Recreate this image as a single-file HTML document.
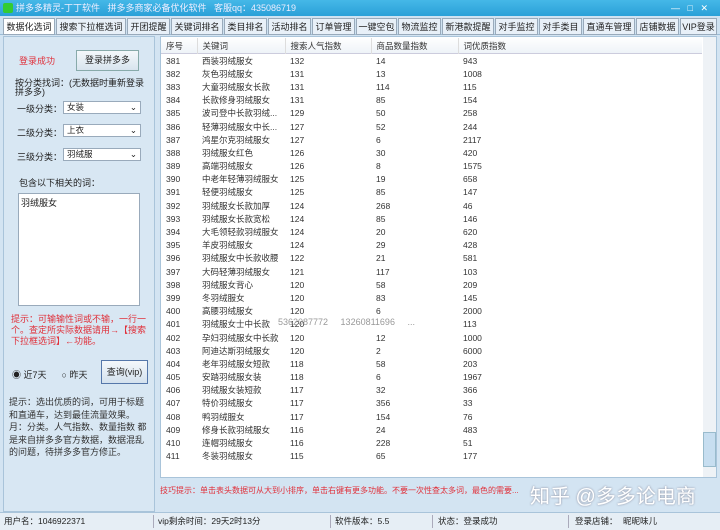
<!DOCTYPE html>
<html><head><meta charset="utf-8"><style>
*{margin:0;padding:0;box-sizing:border-box}
body{width:720px;height:530px;overflow:hidden;background:#d3e4f2;font-family:"Liberation Sans","Noto Sans CJK SC",sans-serif;font-size:9px;color:#222;position:relative}
.abs{position:absolute}
.title{left:0;top:0;width:720px;height:16px;background:linear-gradient(#45b8e8,#2aa0d8);color:#eef;font-size:9px;line-height:16px;padding-left:16px}
.tabs{left:0;top:16px;width:720px;height:19px;background:#cfe2f1;border-bottom:1px solid #9bbcd6}
.tab{position:absolute;top:2px;height:17px;line-height:16px;border:1px solid #9ab;background:#e8f0f8;font-size:9px;text-align:center;color:#222}
.sel{border:1px solid #9ab;background:#fff;height:13px;font-size:8.5px;line-height:11px;padding-left:3px}
.red{color:#e0303a}
table{border-collapse:collapse;font-size:8.5px}
td{height:13.2px;padding:0 0 0 5px;white-space:nowrap}
</style></head><body>
<div class="abs title">拼多多精灵-丁丁软件&nbsp;&nbsp; 拼多多商家必备优化软件&nbsp;&nbsp; 客服qq：435086719
<span style="position:absolute;left:3px;top:3px;width:10px;height:10px;background:#3c3;border-radius:2px"></span>
<span style="position:absolute;right:12px;top:0;color:#fff">—&nbsp;&nbsp; □&nbsp;&nbsp; ✕</span></div>
<div class="abs tabs">
<div class="tab" style="left:3px;width:52px;background:#fff">数据化选词</div>
<div class="tab" style="left:56px;width:70px">搜索下拉框选词</div>
<div class="tab" style="left:127px;width:43px">开团提醒</div>
<div class="tab" style="left:171px;width:52px">关键词排名</div>
<div class="tab" style="left:224px;width:43px">类目排名</div>
<div class="tab" style="left:268px;width:43px">活动排名</div>
<div class="tab" style="left:312px;width:43px">订单管理</div>
<div class="tab" style="left:356px;width:41px">一键空包</div>
<div class="tab" style="left:398px;width:43px">物流监控</div>
<div class="tab" style="left:442px;width:52px">新港款提醒</div>
<div class="tab" style="left:495px;width:43px">对手监控</div>
<div class="tab" style="left:539px;width:43px">对手类目</div>
<div class="tab" style="left:583px;width:52px">直通车管理</div>
<div class="tab" style="left:636px;width:43px">店铺数据</div>
<div class="tab" style="left:680px;width:37px">VIP登录</div>
</div>
<div class="abs" style="left:3px;top:36px;width:152px;height:476px;background:#d8e7f3;border:1px solid #a9c4da"></div>
<div class="abs red" style="left:19px;top:54px">登录成功</div>
<div class="abs" style="left:76px;top:50px;width:63px;height:21px;border:1px solid #8aa;background:linear-gradient(#f4f8fb,#d8e4ee);text-align:center;line-height:19px">登录拼多多</div>
<div class="abs" style="left:15px;top:79px;width:135px;line-height:9px">按分类找词：(无数据时重新登录拼多多)</div>
<div class="abs" style="left:17px;top:102px">一级分类：</div><div class="abs sel" style="left:63px;top:101px;width:78px">女装<span style="float:right;padding-right:3px">⌄</span></div>
<div class="abs" style="left:17px;top:126px">二级分类：</div><div class="abs sel" style="left:63px;top:124px;width:78px">上衣<span style="float:right;padding-right:3px">⌄</span></div>
<div class="abs" style="left:17px;top:150px">三级分类：</div><div class="abs sel" style="left:63px;top:148px;width:78px">羽绒服<span style="float:right;padding-right:3px">⌄</span></div>
<div class="abs" style="left:19px;top:176px">包含以下相关的词：</div>
<div class="abs" style="left:18px;top:193px;width:122px;height:113px;background:#fff;border:1px solid #9ab;padding:2px">羽绒服女</div>
<div class="abs red" style="left:11px;top:314px;width:140px;line-height:11px">提示：可输输性词或不输，一行一个。查定所实际数据请用→【搜索下拉框选词】←功能。</div>
<div class="abs" style="left:12px;top:368px">◉ 近7天&nbsp;&nbsp;&nbsp;&nbsp;&nbsp;&nbsp;○ 昨天</div>
<div class="abs" style="left:101px;top:360px;width:47px;height:24px;border:1px solid #57a;background:linear-gradient(#f4f8fb,#d4e2ee);text-align:center;line-height:22px">查询(vip)</div>
<div class="abs" style="left:9px;top:396px;width:142px;line-height:12.5px;color:#333">提示：选出优质的词，可用于标题和直通车，达到最佳流量效果。月：分类。人气指数、数量指数 都是来自拼多多官方数据，数据混乱的问题，待拼多多官方修正。</div>
<div class="abs" style="left:160px;top:36px;width:557px;height:442px;background:#fff;border:1px solid #a9c4da"></div>
<div class="abs" style="left:161px;top:37px;width:541px;height:17px;background:linear-gradient(#fff,#eef3f8);border-bottom:1px solid #ccd"></div>
<div class="abs" style="left:703px;top:37px;width:13px;height:440px;background:#eef2f6"><div style="margin-top:395px;height:35px;background:#c7def0;border:1px solid #9bc"></div></div>
<table class="abs" style="left:161px;top:38px;color:#333">
<colgroup><col style="width:36px"><col style="width:88px"><col style="width:86px"><col style="width:87px"><col style="width:64px"></colgroup>
<tr style="height:16px"><td>序号</td><td style="border-left:1px solid #ddd">关键词</td><td style="border-left:1px solid #ddd">搜索人气指数</td><td style="border-left:1px solid #ddd">商品数量指数</td><td style="border-left:1px solid #ddd">词优质指数</td></tr>
<tr><td>381</td><td>西装羽绒服女</td><td>132</td><td>14</td><td>943</td></tr>
<tr><td>382</td><td>灰色羽绒服女</td><td>131</td><td>13</td><td>1008</td></tr>
<tr><td>383</td><td>大童羽绒服女长款</td><td>131</td><td>114</td><td>115</td></tr>
<tr><td>384</td><td>长款修身羽绒服女</td><td>131</td><td>85</td><td>154</td></tr>
<tr><td>385</td><td>波司登中长款羽绒...</td><td>129</td><td>50</td><td>258</td></tr>
<tr><td>386</td><td>轻薄羽绒服女中长...</td><td>127</td><td>52</td><td>244</td></tr>
<tr><td>387</td><td>鸿星尔克羽绒服女</td><td>127</td><td>6</td><td>2117</td></tr>
<tr><td>388</td><td>羽绒服女红色</td><td>126</td><td>30</td><td>420</td></tr>
<tr><td>389</td><td>高端羽绒服女</td><td>126</td><td>8</td><td>1575</td></tr>
<tr><td>390</td><td>中老年轻薄羽绒服女</td><td>125</td><td>19</td><td>658</td></tr>
<tr><td>391</td><td>轻便羽绒服女</td><td>125</td><td>85</td><td>147</td></tr>
<tr><td>392</td><td>羽绒服女长款加厚</td><td>124</td><td>268</td><td>46</td></tr>
<tr><td>393</td><td>羽绒服女长款宽松</td><td>124</td><td>85</td><td>146</td></tr>
<tr><td>394</td><td>大毛领轻款羽绒服女</td><td>124</td><td>20</td><td>620</td></tr>
<tr><td>395</td><td>羊皮羽绒服女</td><td>124</td><td>29</td><td>428</td></tr>
<tr><td>396</td><td>羽绒服女中长款收腰</td><td>122</td><td>21</td><td>581</td></tr>
<tr><td>397</td><td>大码轻薄羽绒服女</td><td>121</td><td>117</td><td>103</td></tr>
<tr><td>398</td><td>羽绒服女背心</td><td>120</td><td>58</td><td>209</td></tr>
<tr><td>399</td><td>冬羽绒服女</td><td>120</td><td>83</td><td>145</td></tr>
<tr><td>400</td><td>高腰羽绒服女</td><td>120</td><td>6</td><td>2000</td></tr>
<tr><td>401</td><td>羽绒服女士中长款</td><td>120</td><td></td><td>113</td></tr>
<tr><td>402</td><td>孕妇羽绒服女中长款</td><td>120</td><td>12</td><td>1000</td></tr>
<tr><td>403</td><td>阿迪达斯羽绒服女</td><td>120</td><td>2</td><td>6000</td></tr>
<tr><td>404</td><td>老年羽绒服女短款</td><td>118</td><td>58</td><td>203</td></tr>
<tr><td>405</td><td>安踏羽绒服女装</td><td>118</td><td>6</td><td>1967</td></tr>
<tr><td>406</td><td>羽绒服女装短款</td><td>117</td><td>32</td><td>366</td></tr>
<tr><td>407</td><td>特价羽绒服女</td><td>117</td><td>356</td><td>33</td></tr>
<tr><td>408</td><td>鸭羽绒服女</td><td>117</td><td>154</td><td>76</td></tr>
<tr><td>409</td><td>修身长款羽绒服女</td><td>116</td><td>24</td><td>483</td></tr>
<tr><td>410</td><td>连帽羽绒服女</td><td>116</td><td>228</td><td>51</td></tr>
<tr><td>411</td><td>冬装羽绒服女</td><td>115</td><td>65</td><td>177</td></tr>
</table>
<div class="abs" style="left:278px;top:317px;color:#999">5362087772&nbsp;&nbsp;&nbsp;&nbsp; 13260811696&nbsp;&nbsp;&nbsp;&nbsp; ...</div>
<div class="abs red" style="left:160px;top:485px;font-size:8px">技巧提示：单击表头数据可从大到小排序，单击右键有更多功能。不要一次性查太多词，最色的需要...</div>
<div class="abs" style="left:530px;top:480px;font-size:20px;color:#fff;text-shadow:0 0 2px #889">知乎 @多多论电商</div>
<div class="abs" style="left:0;top:512px;width:720px;height:18px;background:#e6eef5;border-top:1px solid #a9c4da;line-height:17px;font-size:8.5px">
<span class="abs" style="left:4px">用户名：1046922371</span>
<span class="abs" style="left:158px">vip剩余时间：29天2时13分</span>
<span class="abs" style="left:335px">软件版本：5.5</span>
<span class="abs" style="left:438px">状态：登录成功</span>
<span class="abs" style="left:575px">登录店铺：</span><span class="abs" style="left:623px">昵昵味儿</span>
<span class="abs" style="left:153px;top:2px;height:13px;border-left:1px solid #aab"></span>
<span class="abs" style="left:330px;top:2px;height:13px;border-left:1px solid #aab"></span>
<span class="abs" style="left:432px;top:2px;height:13px;border-left:1px solid #aab"></span>
<span class="abs" style="left:568px;top:2px;height:13px;border-left:1px solid #aab"></span>
</div>
</body></html>
